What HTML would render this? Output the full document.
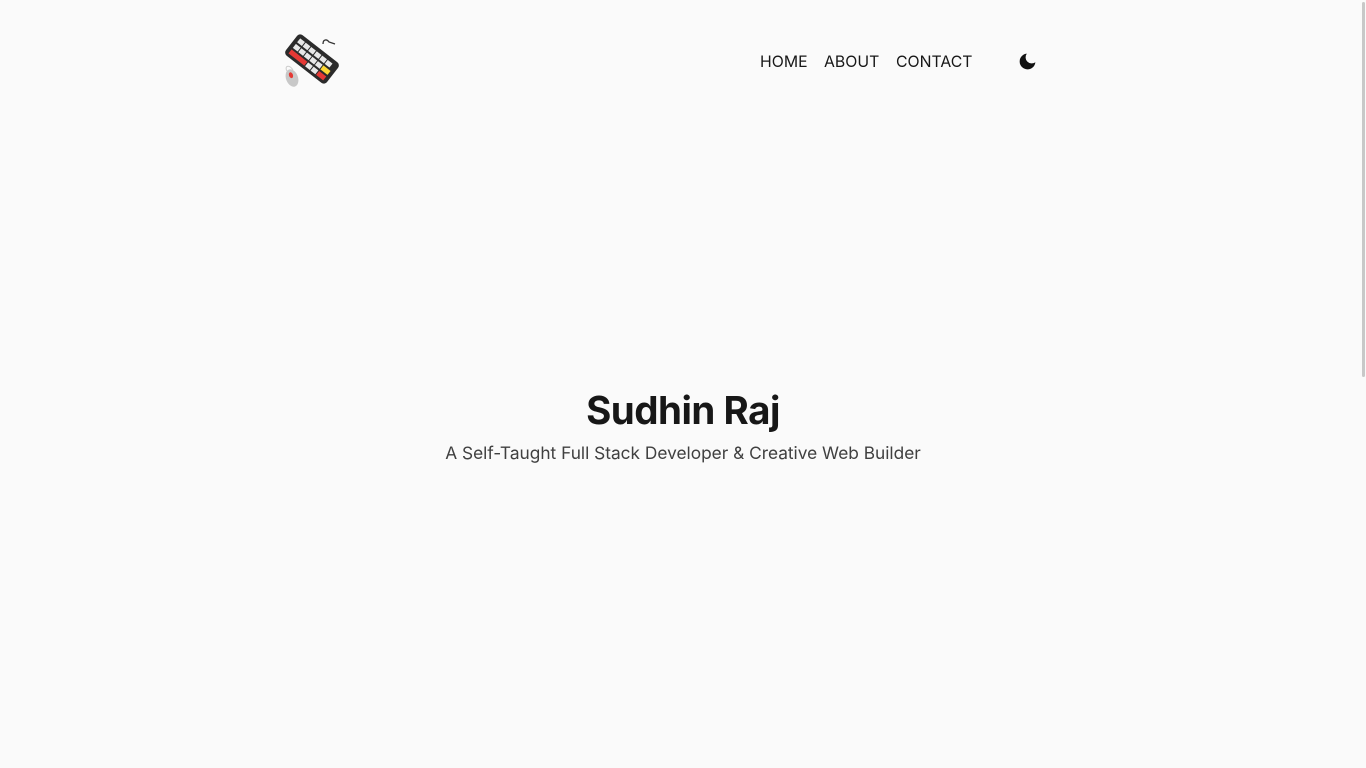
<!DOCTYPE html>
<html><head><meta charset="utf-8"><style>
html,body{margin:0;padding:0;background:#fafafa;width:1366px;height:768px;overflow:hidden;font-family:"Inter","Liberation Sans",sans-serif;color:#171717}
.logo{position:absolute;left:279px;top:30px}
nav{position:absolute;top:52px;left:760px;font-size:15.8px;letter-spacing:0}
nav span{position:absolute;white-space:nowrap}
.moon{position:absolute;left:1017px;top:51px}
h1{position:absolute;top:388px;left:0;width:1366px;text-align:center;margin:0;font-size:38.5px;font-weight:700;letter-spacing:-0.5px;color:#171717}
p{position:absolute;top:443px;left:0;width:1366px;text-align:center;margin:0;font-size:17.3px;color:#404040}
.sb{position:absolute;left:1362px;top:2px;width:3px;height:375px;background:#c8c8c8;border-radius:2px}
</style></head><body>
<svg class="logo" width="64" height="62" viewBox="0 0 64 62">
  <path d="M44 14 C44 9 48 9 50 12 L56 14" stroke="#333" stroke-width="1.3" fill="none"/>
  <g transform="translate(33 29) rotate(38)">
    <rect x="-26" y="-13" width="52" height="26" rx="4" fill="#2b2b2b"/>
    <g fill="#e8e8e8">
      <rect x="-22" y="-9" width="6" height="5"/><rect x="-15" y="-9" width="6" height="5"/><rect x="-8" y="-9" width="6" height="5"/><rect x="-1" y="-9" width="6" height="5"/><rect x="6" y="-9" width="6" height="5"/><rect x="13" y="-9" width="6" height="5"/>
      <rect x="-22" y="-2" width="6" height="5"/><rect x="-15" y="-2" width="6" height="5"/><rect x="-8" y="-2" width="6" height="5"/><rect x="-1" y="-2" width="6" height="5"/><rect x="6" y="-2" width="6" height="5"/>
      <rect x="-1" y="5" width="6" height="5"/><rect x="6" y="5" width="6" height="5"/>
    </g>
    <rect x="-22" y="5" width="20" height="5" fill="#e53935"/>
    <rect x="13" y="-2" width="9" height="5" fill="#fdd835"/>
    <rect x="13" y="5" width="9" height="5" fill="#e53935"/>
  </g>
  <path d="M14 40 C10 34 5 36 8 41" stroke="#ccc" stroke-width="1" fill="none"/>
  <g transform="translate(13 48) rotate(-20)">
    <ellipse cx="0" cy="0" rx="6" ry="9" fill="#c8c8c8"/>
    <ellipse cx="0" cy="-3" rx="2" ry="3" fill="#e53935"/>
  </g>
</svg>
<nav><span style="left:0">HOME</span><span style="left:64px">ABOUT</span><span style="left:136px">CONTACT</span></nav>
<svg class="moon" width="21" height="21" viewBox="0 0 24 24"><path d="M21 12.8A9 9 0 1 1 11.2 3a7 7 0 0 0 9.8 9.8z" fill="#111"/></svg>
<h1>Sudhin Raj</h1>
<p>A Self-Taught Full Stack Developer &amp; Creative Web Builder</p>
<div class="sb"></div>
</body></html>
